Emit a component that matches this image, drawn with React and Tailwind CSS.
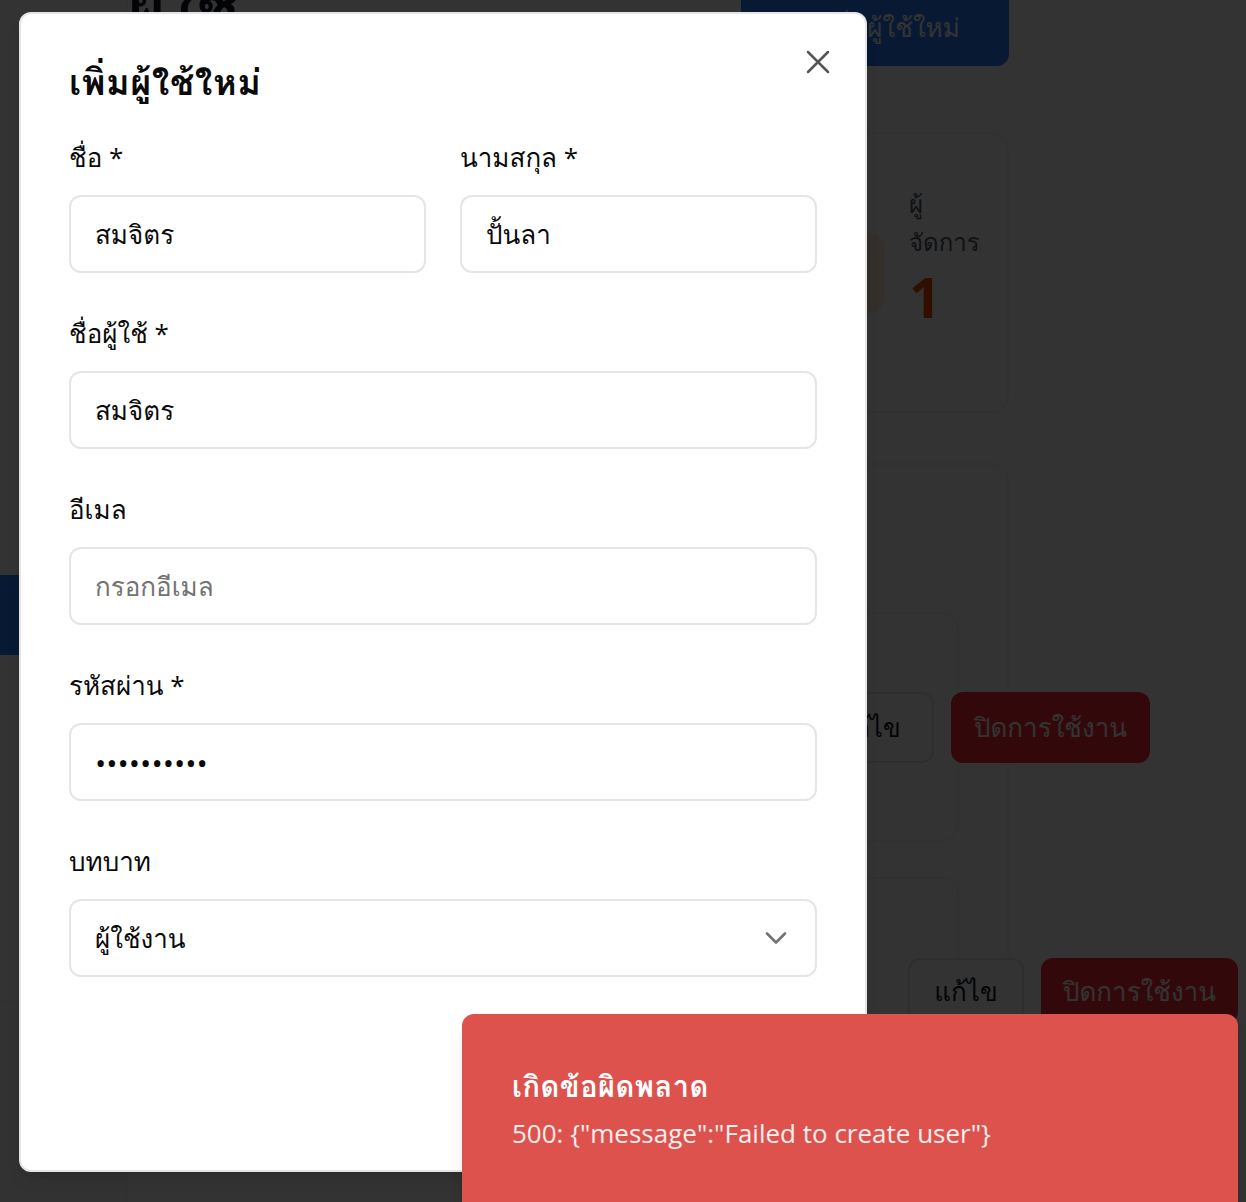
import React from "react";
import { X, ChevronDown, Users, ShieldCheck, UserCheck, Plus } from "lucide-react";

const Field = ({ label, children }) => (
  <div className="flex flex-col gap-[20px]">
    <label className="text-[26px] leading-[36px] text-[#0a0a0a]">{label}</label>
    {children}
  </div>
);

const inputCls =
  "h-[78px] w-full rounded-[12px] border-2 border-[#e5e5e5] bg-white px-[24px] text-[26px] text-[#0a0a0a] placeholder:text-[#737373] outline-none";

const StatCard = ({ icon, label, value, tone, wide }) => (
  <div className={`${wide ? "w-[231px] shrink-0" : "flex-1"} h-[281px] rounded-[18px] border-2 border-gray-100 bg-white p-[24px] flex items-center gap-[25px]`}>
    <div className={`w-[80px] h-[80px] shrink-0 rounded-[14px] flex items-center justify-center ${tone.box}`}>{icon}</div>
    {label && (
      <div className="flex flex-col mb-[30px]">
        <span className="text-[24px] leading-[38px] text-gray-600">{label[0]}</span>
        <span className="text-[24px] leading-[38px] text-gray-600">{label[1]}</span>
        <span className={`text-[56px] leading-[70px] font-bold ${tone.text}`}>{value}</span>
      </div>
    )}
  </div>
);

const UserRow = ({ compact }) => (
  <div className={`rounded-[18px] border-2 border-gray-100 px-[36px] flex ${compact ? "h-[260px] items-start pt-[79px]" : "h-[230px] items-center"} gap-[24px]`}>
    <div className="w-[100px] h-[100px] shrink-0 rounded-full bg-blue-500" />
    <div className="flex-1 min-w-0" />
    <div className={`flex shrink-0 gap-[17px] ${compact ? "mr-[-317px]" : "mr-[-229px]"}`}>
      <button className={`${compact ? "h-[66px] w-[116px]" : "h-[71px] w-[130px]"} rounded-[12px] border-2 border-gray-200 bg-white text-[26px] text-gray-900`}>
        แก้ไข
      </button>
      <button className={`${compact ? "h-[66px] w-[197px]" : "h-[71px] w-[199px]"} rounded-[12px] bg-red-500 text-[26px] text-white`}>
        ปิดการใช้งาน
      </button>
    </div>
  </div>
);

export default function App() {
  return (
    <div className="relative w-full h-[1202px] overflow-hidden bg-white flex font-['Open_Sans','Waree','Loma','Garuda','Noto_Sans_Thai_Looped','Noto_Serif_Thai','Noto_Sans_Thai',sans-serif]">
      {/* page behind the dialog */}
      <aside className="w-[128px] shrink-0 border-r-2 border-gray-100 flex flex-col">
        <div className="h-[100px]" />
        <nav className="mt-[75px] flex flex-col gap-[20px]">
          {[0, 1, 2, 3, 4].map((i) => (
            <div key={i} className={`h-[80px] ${i === 4 ? "bg-blue-500" : ""}`} />
          ))}
        </nav>
        <div className="mt-auto h-[202px] border-t-2 border-gray-100 bg-gray-50" />
      </aside>

      <main className="w-[881px] shrink-0 -mt-[24px]">
        <div className="h-[90px] flex items-start justify-between">
          <h1 className="-mt-[6px] text-[64px] leading-[72px] font-bold text-gray-900">ผู้ใช้</h1>
          <button className="h-[90px] w-[268px] rounded-[12px] bg-blue-500 text-white text-[26px] pt-[12px] flex items-center justify-center gap-[8px]">
            <Plus size={26} /> เพิ่มผู้ใช้ใหม่
          </button>
        </div>

        <div className="mt-[66px] flex gap-[24px]">
          <StatCard icon={<Users size={36} className="text-blue-600" />} tone={{ box: "bg-blue-100" }} />
          <StatCard icon={<UserCheck size={36} className="text-green-600" />} tone={{ box: "bg-green-100" }} />
          <StatCard wide icon={<ShieldCheck size={40} className="text-orange-600" />} label={["ผู้", "จัดการ"]} value="1" tone={{ box: "bg-orange-100", text: "text-orange-600" }} />
        </div>

        <div className="mt-[50px] rounded-[18px] border-2 border-gray-100 px-[48px] pt-[40px] flex flex-col gap-[35px]">
          <div className="h-[72px]" />
          <UserRow />
          <UserRow compact />
        </div>
      </main>

      {/* overlay */}
      <div className="absolute inset-0 bg-black/80" />

      {/* dialog */}
      <div className="absolute left-[19px] top-[12px] w-[848px] h-[1160px] rounded-[12px] border-2 border-[#e5e5e5] bg-white p-[48px] shadow-lg">
        <button className="absolute right-[27px] top-[28px] text-[#555555]">
          <X size={40} strokeWidth={1.5} />
        </button>
        <h2 className="text-[36px] leading-[40px] font-bold tracking-[0.5px] text-[#0a0a0a]">เพิ่มผู้ใช้ใหม่</h2>

        <div className="mt-[37px] flex flex-col gap-[42px]">
          <div className="grid grid-cols-2 gap-[34px]">
            <Field label="ชื่อ *">
              <input className={inputCls} defaultValue="สมจิตร" />
            </Field>
            <Field label="นามสกุล *">
              <input className={inputCls} defaultValue="ปั้นลา" />
            </Field>
          </div>
          <Field label="ชื่อผู้ใช้ *">
            <input className={inputCls} defaultValue="สมจิตร" />
          </Field>
          <Field label="อีเมล">
            <input className={inputCls} placeholder="กรอกอีเมล" />
          </Field>
          <Field label="รหัสผ่าน *">
            <input
              type="password"
              className="h-[78px] w-full rounded-[12px] border-2 border-[#e5e5e5] bg-white px-[24px] text-[30px] text-[#0a0a0a] outline-none"
              defaultValue="1234567890"
            />
          </Field>
          <Field label="บทบาท">
            <div className="h-[78px] w-full rounded-[12px] border-2 border-[#e5e5e5] bg-white pl-[24px] pr-[21px] flex items-center justify-between">
              <span className="text-[26px] text-[#0a0a0a]">ผู้ใช้งาน</span>
              <ChevronDown size={36} strokeWidth={1.75} className="text-[#737373]" />
            </div>
          </Field>
        </div>
      </div>

      {/* toast */}
      <div className="absolute left-[462px] top-[1014px] w-[776px] h-[200px] rounded-[12px] bg-[#dd524d] pl-[50px] pt-[54px] flex flex-col gap-[11px] shadow-lg">
        <span className="text-[29px] leading-[36px] font-bold tracking-[0.5px] text-white">เกิดข้อผิดพลาด</span>
        <span className="text-[26px] leading-[36px] text-white/90">500: {'{"message":"Failed to create user"}'}</span>
      </div>
    </div>
  );
}
